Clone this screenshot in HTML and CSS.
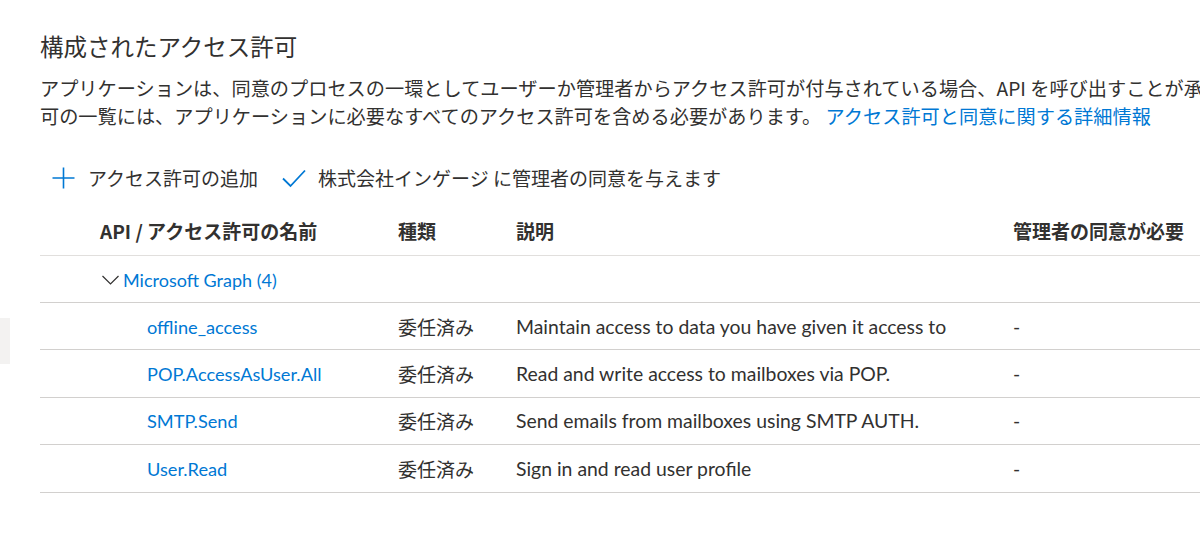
FILE: index.html
```html
<!DOCTYPE html>
<html lang="ja">
<head>
<meta charset="utf-8">
<title>構成されたアクセス許可</title>
<link rel="stylesheet" href="styles.css">
</head>
<body>
<div class="page">
  <div class="rail"><div class="rail-block"></div></div>
  <main class="main">
    <h2 class="title">構成されたアクセス許可</h2>
    <p class="desc">
      <span class="line">アプリケーションは、同意のプロセスの一環としてユーザーか管理者からアクセス許可が付与されている場合、API を呼び出すことが承認されます。構成されたアクセス許</span>
      <span class="line">可の一覧には、アプリケーションに必要なすべてのアクセス許可を含める必要があります。 <a class="link" href="#">アクセス許可と同意に関する詳細情報</a></span>
    </p>
    <div class="toolbar">
      <button class="tool">
        <svg class="ico-plus" width="23" height="22" viewBox="0 0 23 22"><path d="M11.5 0.5V21.5M0.5 11H22.5" stroke="#0078d4" stroke-width="1.6" fill="none"/></svg>
        <span>アクセス許可の追加</span>
      </button>
      <button class="tool">
        <svg class="ico-check" width="24" height="19" viewBox="0 0 24 19"><path d="M1 9.5L8.5 17L23 1.5" stroke="#0078d4" stroke-width="1.8" fill="none"/></svg>
        <span>株式会社インゲージ に管理者の同意を与えます</span>
      </button>
    </div>
    <div class="table">
      <div class="row head">
        <div class="c c-name">API / アクセス許可の名前</div>
        <div class="c">種類</div>
        <div class="c">説明</div>
        <div class="c">管理者の同意が必要</div>
      </div>
      <div class="row group">
        <div class="c c-group">
          <svg class="chev" width="17" height="10" viewBox="0 0 17 10"><path d="M0.5 1L8.5 9L16.5 1" stroke="#323130" stroke-width="1.2" fill="none"/></svg>
          <a class="link" href="#">Microsoft Graph (4)</a>
        </div>
      </div>
      <div class="row item">
        <div class="c c-perm"><a class="link" href="#">offline_access</a></div>
        <div class="c c-jp">委任済み</div>
        <div class="c">Maintain access to data you have given it access to</div>
        <div class="c">-</div>
      </div>
      <div class="row item">
        <div class="c c-perm"><a class="link" href="#">POP.AccessAsUser.All</a></div>
        <div class="c c-jp">委任済み</div>
        <div class="c">Read and write access to mailboxes via POP.</div>
        <div class="c">-</div>
      </div>
      <div class="row item">
        <div class="c c-perm"><a class="link" href="#">SMTP.Send</a></div>
        <div class="c c-jp">委任済み</div>
        <div class="c">Send emails from mailboxes using SMTP AUTH.</div>
        <div class="c">-</div>
      </div>
      <div class="row item">
        <div class="c c-perm"><a class="link" href="#">User.Read</a></div>
        <div class="c c-jp">委任済み</div>
        <div class="c">Sign in and read user profile</div>
        <div class="c">-</div>
      </div>
    </div>
  </main>
</div>
</body>
</html>
```

FILE: styles.css
```css
html, body {
  margin: 0;
  padding: 0;
  background: #ffffff;
  overflow: hidden;
}
body {
  width: 1200px;
  height: 545px;
  font-family: "Segoe UI", Lato, "Noto Sans CJK JP", sans-serif;
  color: #323130;
  font-size: 19.4px;
}
.page {
  display: flex;
  width: 1200px;
}
.rail {
  width: 10px;
  flex: none;
}
.rail-block {
  margin-top: 318px;
  height: 46px;
  background: #f3f2f1;
}
.main {
  flex: 1;
  min-width: 0;
  padding-left: 30px;
}
.title {
  margin: 30px 0 0;
  font-size: 23.5px;
  line-height: 32px;
  font-weight: 400;
  font-family: "Noto Sans CJK JP", sans-serif;
  color: #323130;
}
.desc {
  margin: 12px 0 0;
  font-family: "Noto Sans CJK JP", sans-serif;
  line-height: 28px;
  font-size: 19.2px;
}
.line {
  display: block;
  white-space: nowrap;
}
.link {
  color: #0078d4;
  text-decoration: none;
}
.toolbar {
  display: flex;
  align-items: center;
  gap: 24px;
  margin-top: 34px;
  padding-left: 12px;
  height: 28px;
}
.tool {
  display: flex;
  align-items: center;
  gap: 13px;
  border: 0;
  background: none;
  padding: 0;
  font: inherit;
  font-family: "Noto Sans CJK JP", sans-serif;
  font-size: 19px;
  color: #323130;
  line-height: 28px;
}
.tool:nth-child(2) { gap: 12px; }
.table {
  margin-top: 14px;
}
.row {
  display: grid;
  grid-template-columns: 358px 118px 497px 1fr;
  align-items: center;
  height: 46px;
  border-bottom: 1px solid #d2d0ce;
  white-space: nowrap;
}
.row.head {
  height: 49px;
  font-size: 19px;
  font-weight: 700;
  font-family: "Noto Sans CJK JP", sans-serif;
  border-bottom-color: #e1dfdd;
}
.row.group {
  height: 45px;
  padding-top: 1px;
}
.row.group .link { font-size: 18px; }
.row.item {
  height: 45.4px;
  padding-top: 1px;
}
.c {
  line-height: 28px;
}
.c-jp {
  font-family: "Noto Sans CJK JP", sans-serif;
  font-size: 19px;
}
.c-name { padding-left: 60px; }
.c-group {
  grid-column: 1 / -1;
  display: flex;
  align-items: center;
  gap: 4px;
  padding-left: 62px;
}
.chev { margin-top: 1px; }
.c-perm { padding-left: 107px; }
.c-perm .link { font-size: 18.2px; }
```
